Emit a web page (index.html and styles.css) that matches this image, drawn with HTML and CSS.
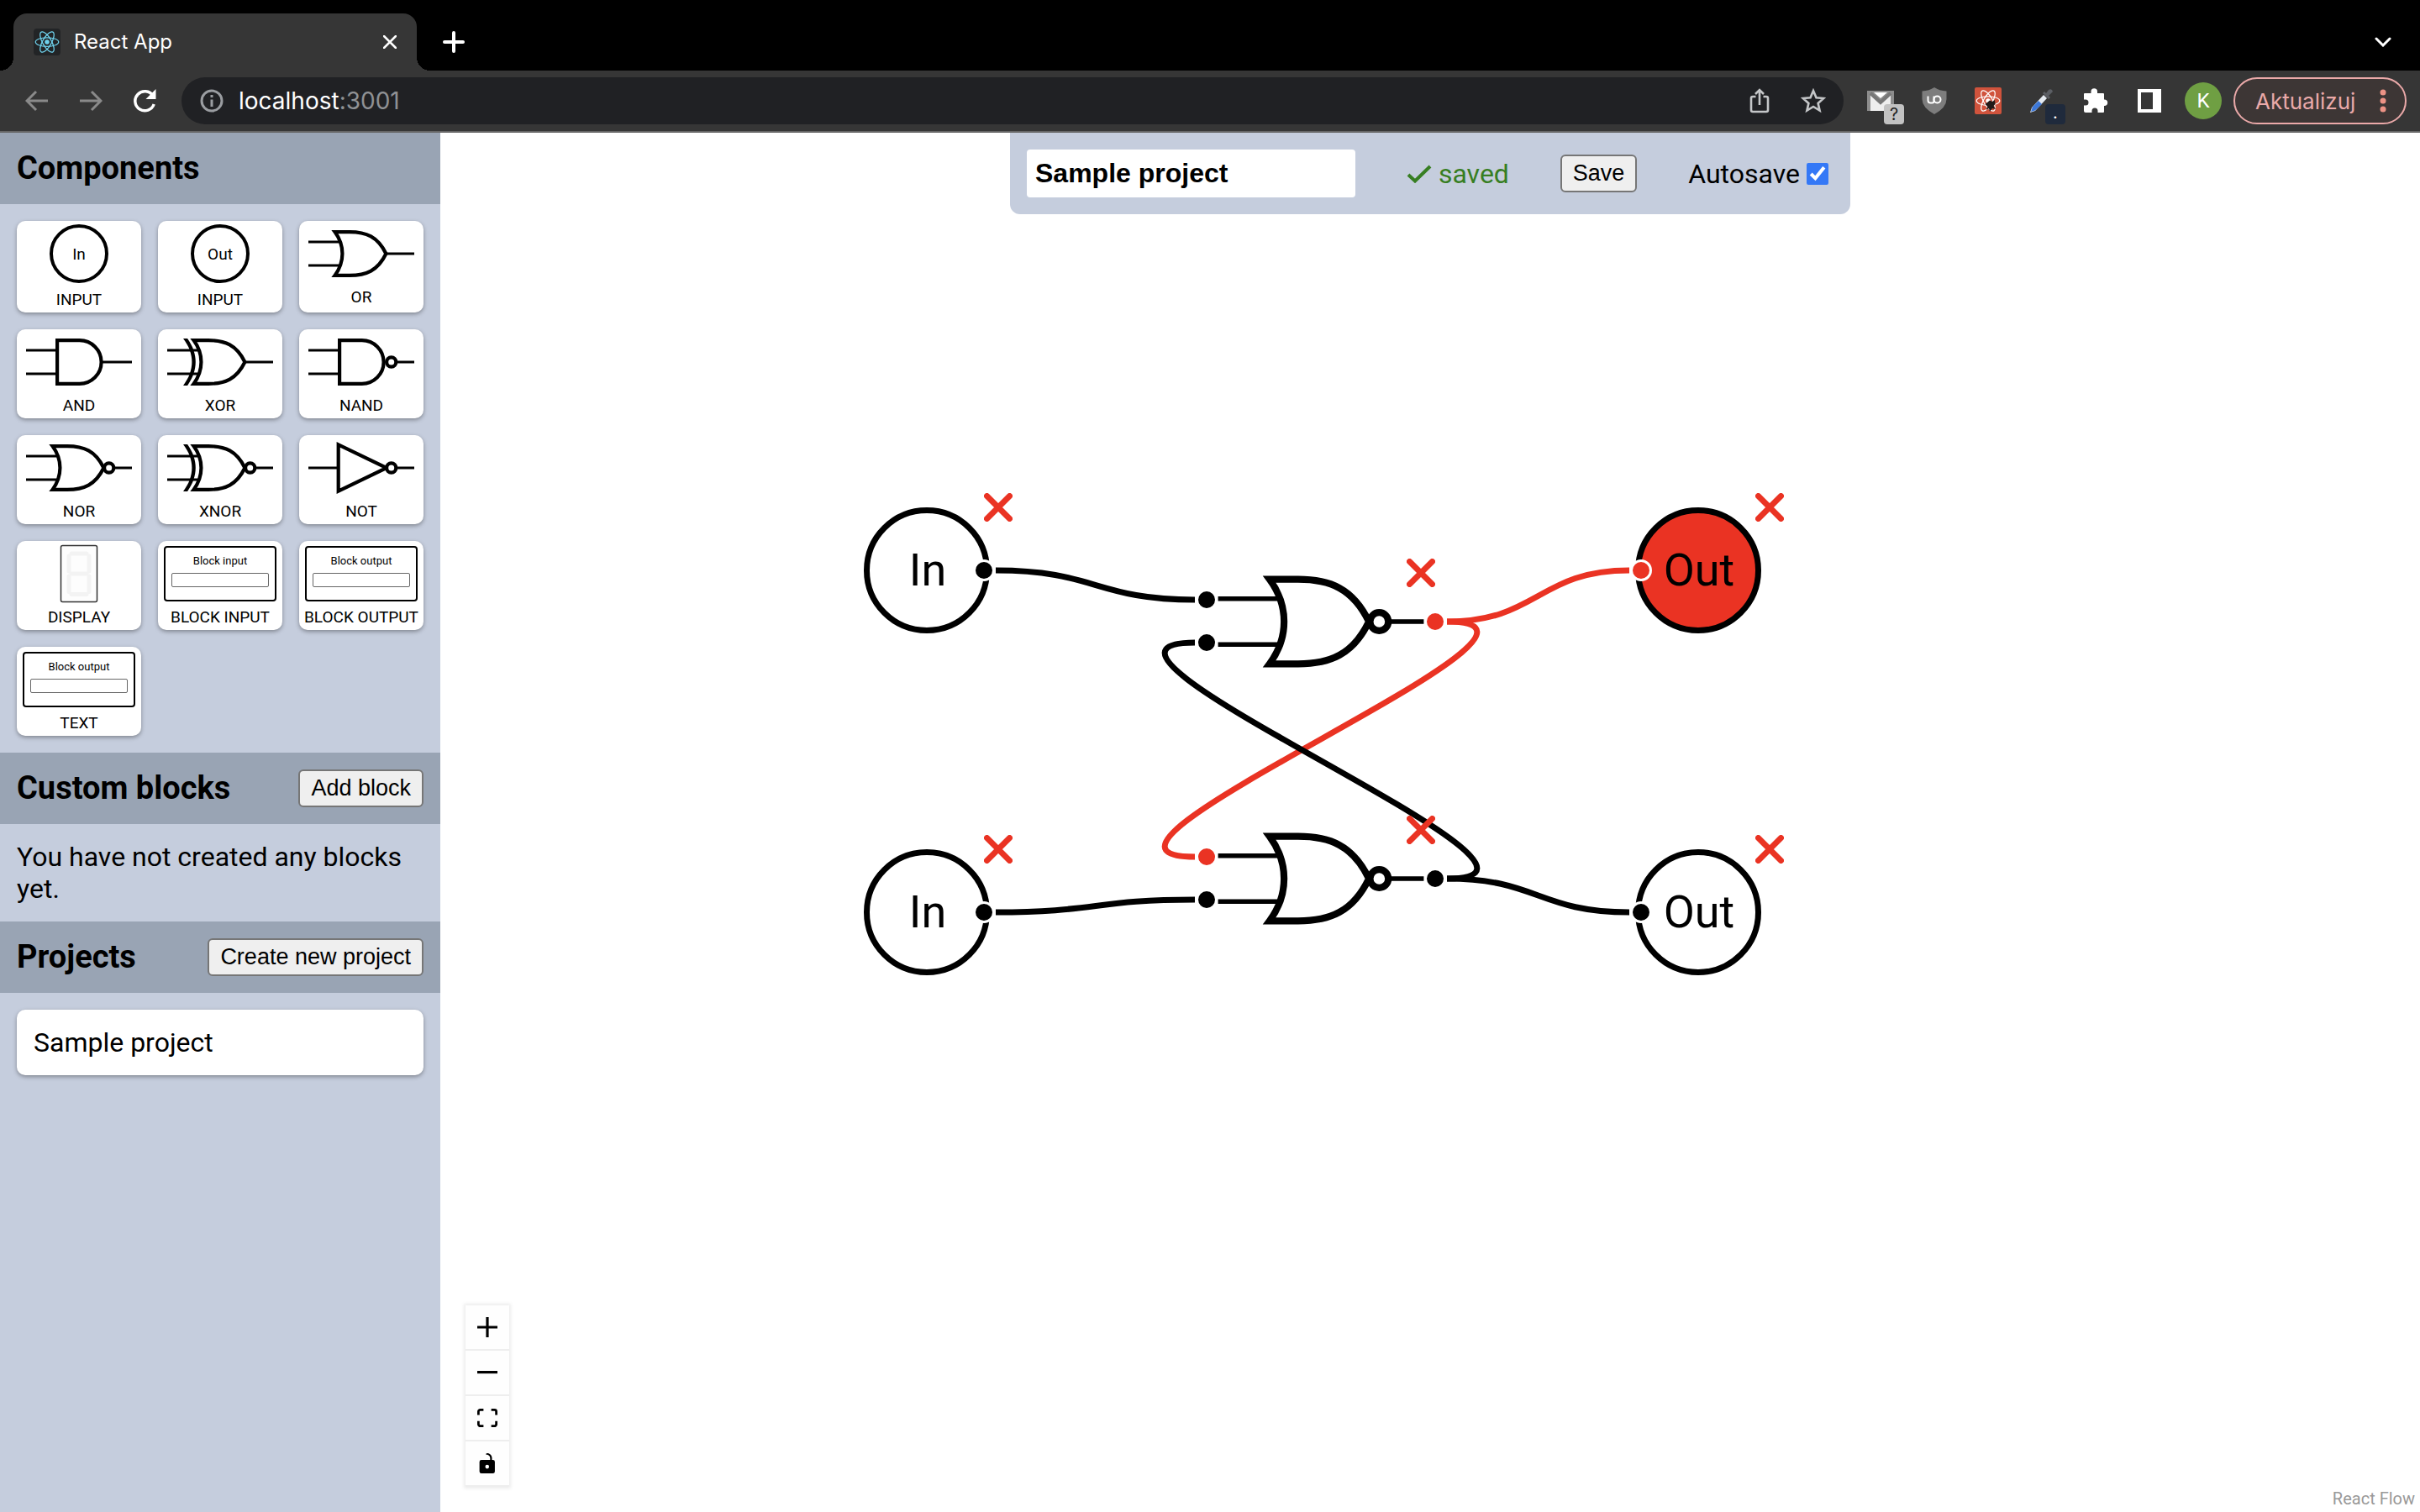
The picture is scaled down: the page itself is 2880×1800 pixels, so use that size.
FILE: index.html
```html
<!DOCTYPE html>
<html lang="en">
<head>
<meta charset="utf-8">
<title>React App</title>
<link rel="stylesheet" href="styles.css">
</head>
<body>
<svg class="defs" aria-hidden="true">
  <symbol id="gate-or" viewBox="0 0 100 50"><path class="thin" d="M5 15H32M5 35H32M71 25H95"/><path class="thick" d="M27.500 6.500H40C54 6.500 64 10.500 71 25C64 39.500 54 43.500 40 43.500H27.500C36 32 36 18 27.500 6.500Z"/></symbol>
  <symbol id="gate-nor" viewBox="0 0 100 50"><path class="thin" d="M5 15H32M5 35H32M79 25H95"/><path class="thick" d="M27.500 6.500H40C54 6.500 64 10.500 71 25C64 39.500 54 43.500 40 43.500H27.500C36 32 36 18 27.500 6.500Z"/><circle class="thick" cx="75.500" cy="25" r="4"/></symbol>
  <symbol id="gate-xor" viewBox="0 0 100 50"><path class="thin" d="M5 15H32M5 35H32M71 25H95"/><path class="thick" d="M27.500 6.500H40C54 6.500 64 10.500 71 25C64 39.500 54 43.500 40 43.500H27.500C36 32 36 18 27.500 6.500Z"/><path d="M18.600 5H22.200C31.500 18 31.500 32 22.200 45H18.600C28.500 32 28.500 18 18.600 5Z"/></symbol>
  <symbol id="gate-xnor" viewBox="0 0 100 50"><path class="thin" d="M5 15H32M5 35H32M79 25H95"/><path class="thick" d="M27.500 6.500H40C54 6.500 64 10.500 71 25C64 39.500 54 43.500 40 43.500H27.500C36 32 36 18 27.500 6.500Z"/><circle class="thick" cx="75.500" cy="25" r="4"/><path d="M18.600 5H22.200C31.500 18 31.500 32 22.200 45H18.600C28.500 32 28.500 18 18.600 5Z"/></symbol>
  <symbol id="gate-and" viewBox="0 0 100 50"><path class="thin" d="M5 15H31M5 35H31M70 25H95"/><path class="thick" d="M31.500 6.500H50.500A18.500 18.500 0 0 1 50.500 43.500H31.500Z"/></symbol>
  <symbol id="gate-nand" viewBox="0 0 100 50"><path class="thin" d="M5 15H31M5 35H31M79 25H95"/><path class="thick" d="M31.500 6.500H50.500A18.500 18.500 0 0 1 50.500 43.500H31.500Z"/><circle class="thick" cx="75.500" cy="25" r="4"/></symbol>
  <symbol id="gate-not" viewBox="0 0 100 50"><path class="thin" d="M5 25H30M79 25H95"/><path class="thick" d="M30.500 5.300L71.500 25L30.500 44.700Z"/><circle class="thick" cx="75.500" cy="25" r="4"/></symbol>
  <symbol id="atom" viewBox="-12 -12 24 24"><circle r="2.200" fill="currentColor"/><g fill="none" stroke="currentColor"><ellipse rx="11" ry="4.200"/><ellipse rx="11" ry="4.200" transform="rotate(60)"/><ellipse rx="11" ry="4.200" transform="rotate(120)"/></g></symbol>
  <symbol id="cross" viewBox="0 0 34 34"><path d="M3.500 3.500L30.500 30.500M30.500 3.500L3.500 30.500" fill="none" stroke="currentColor" stroke-width="7" stroke-linecap="round"/></symbol>
</svg>

<header class="browser">
  <div class="tabstrip">
    <div class="tab">
      <svg class="favicon" viewBox="0 0 32 32"><rect width="32" height="32" rx="4" fill="#222426"/><use href="#atom" x="1" y="1" width="30" height="30"/></svg>
      <span class="tab-title">React App</span>
      <button class="bare" aria-label="Close tab"><svg width="16" height="16" viewBox="0 0 16 16"><path d="M1 1L15 15M15 1L1 15" stroke="#fff" stroke-width="2.500" stroke-linecap="round"/></svg></button>
    </div>
    <button class="bare tool" aria-label="New tab"><svg width="26" height="26" viewBox="0 0 26 26"><path d="M13 2V24M2 13H24" stroke="#fff" stroke-width="4" stroke-linecap="round"/></svg></button>
    <button class="bare tool tab-search" aria-label="Search tabs"><svg width="20" height="12" viewBox="0 0 20 12"><path d="M2 2L10 10L18 2" fill="none" stroke="#fff" stroke-width="3" stroke-linecap="round"/></svg></button>
  </div>
  <div class="toolbar">
    <nav class="tools">
      <button class="bare tool" aria-label="Back"><svg width="28" height="28" viewBox="0 0 28 28"><path d="M27 14H3M13 3L2 14L13 25" fill="none" stroke="#8a8a8a" stroke-width="3"/></svg></button>
      <button class="bare tool" aria-label="Forward"><svg width="28" height="28" viewBox="0 0 28 28"><path d="M1 14H25M15 3L26 14L15 25" fill="none" stroke="#8a8a8a" stroke-width="3"/></svg></button>
      <button class="bare tool" aria-label="Reload"><svg width="28" height="28" viewBox="0 0 28 28"><path d="M24 8A11.500 11.500 0 1 0 25.200 18" fill="none" stroke="#fff" stroke-width="3.500"/><path d="M27.500 0V12H15.500Z" fill="#fff"/></svg></button>
    </nav>
    <div class="omnibox">
      <svg width="28" height="28" viewBox="0 0 28 28"><circle cx="14" cy="14" r="12" fill="none" stroke="#9a9da1" stroke-width="3"/><path d="M14 12.500V21M14 7V10" stroke="#9a9da1" stroke-width="3"/></svg>
      <span class="url">localhost<span class="port">:3001</span></span>
      <span class="tools">
        <button class="bare tool" aria-label="Share"><svg width="24" height="30" viewBox="0 0 24 30"><path d="M7.500 10H4Q2 10 2 12V26Q2 28 4 28H20Q22 28 22 26V12Q22 10 20 10H16.500M12 20V2M7 7L12 2L17 7" fill="none" stroke="#c4c6c8" stroke-width="2.600"/></svg></button>
        <button class="bare tool" aria-label="Bookmark"><svg width="30" height="30" viewBox="0 0 30 30"><path d="M15 3L18.500 11.300L27.300 12L20.600 17.900L22.600 26.600L15 22L7.400 26.600L9.400 17.900L2.700 12L11.500 11.300Z" fill="none" stroke="#c4c6c8" stroke-width="2.600"/></svg></button>
      </span>
    </div>
    <div class="tools">
      <button class="bare tool" aria-label="Mail"><svg width="32" height="24" viewBox="0 0 32 24"><rect width="32" height="24" fill="#8d8d8d"/><path d="M4 24V5L16 16L28 5V24Z" fill="#eee"/><path d="M8 2H24L16 9Z" fill="#fff"/><path d="M4 3L16 14L28 3" fill="none" stroke="#777" stroke-width="4"/></svg><span class="badge">?</span></button>
      <button class="bare tool" aria-label="uBlock"><svg width="30" height="32" viewBox="0 0 30 32"><path d="M15 0Q21 4 29.500 4.500V14Q29.500 24 15 32Q.5 24 .5 14V4.500Q9 4 15 0Z" fill="#7d7d7d"/><path d="M7.500 10.500V15.500Q7.500 18.500 10.500 18.500H12.500Q14.500 18.500 14.500 16V10.500" fill="none" stroke="#fff" stroke-width="2"/><circle cx="18.500" cy="14.500" r="4" fill="none" stroke="#fff" stroke-width="2"/></svg></button>
      <button class="bare tool" aria-label="React tools"><svg class="white" width="32" height="32" viewBox="0 0 32 32"><rect width="32" height="32" rx="2" fill="#d0533c"/><use href="#atom" x="1" y="1" width="30" height="30"/><path d="M15 18L18 15.500L21 17L24 15L24.500 20L22.500 22L25 26L21 25L18 29L17 25L13.500 27L15.500 23L12.500 20Z" fill="#221a18"/></svg></button>
      <button class="bare tool" aria-label="Color picker"><svg width="30" height="30" viewBox="0 0 30 30"><path d="M1 29L3 23L17 8L21 12L7 27Z" fill="#e4eaf1"/><path d="M2 28L4 22L11 15L15 19L7 26.500Z" fill="#3d78d8"/><path d="M16 6L23 13L25 11L23 9L28 4Q27 0 23 2L20 6L18 4Z" fill="#5b5e64"/></svg><span class="badge dark">.</span></button>
      <button class="bare tool" aria-label="Extensions"><svg width="30" height="30" viewBox="0 0 30 30"><path d="M2 6H9.500V4A3.700 3.700 0 0 1 17 4V6H24Q25 6 25 7V13.500H26A3.800 3.800 0 0 1 26 21H25V28Q25 29 24 29H17.500V27A3.500 3.500 0 0 0 10.500 27V29H3Q1 29 1 27V20.500H3A3.500 3.500 0 0 0 3 13.500H1V7Q1 6 2 6Z" fill="#fff"/></svg></button>
      <button class="bare tool" aria-label="Side panel"><svg width="28" height="28" viewBox="0 0 28 28"><path d="M0 0H28V28H0ZM4 4V24H18V4Z" fill="#fff" fill-rule="evenodd"/></svg></button>
      <button class="bare tool" aria-label="Profile"><span class="avatar">K</span></button>
    </div>
    <button class="update">Aktualizuj<svg width="8" height="28" viewBox="0 0 8 28"><g fill="#ec9285"><circle cx="4" cy="4" r="3.500"/><circle cx="4" cy="14" r="3.500"/><circle cx="4" cy="24" r="3.500"/></g></svg></button>
  </div>
</header>

<div class="app">
  <aside class="sidebar">
    <div class="section-head"><h3>Components</h3></div>
    <div class="palette">
      <div class="part tall"><svg class="icon" viewBox="0 0 140 70"><circle cx="70" cy="35" r="33" fill="none" stroke="#000" stroke-width="4"/><text x="70" y="42" text-anchor="middle">In</text></svg><span>INPUT</span></div>
      <div class="part tall"><svg class="icon" viewBox="0 0 140 70"><circle cx="70" cy="35" r="33" fill="none" stroke="#000" stroke-width="4"/><text x="70" y="42" text-anchor="middle">Out</text></svg><span>INPUT</span></div>
      <div class="part"><svg class="icon"><use href="#gate-or"/></svg><span>OR</span></div>
      <div class="part"><svg class="icon"><use href="#gate-and"/></svg><span>AND</span></div>
      <div class="part"><svg class="icon"><use href="#gate-xor"/></svg><span>XOR</span></div>
      <div class="part"><svg class="icon"><use href="#gate-nand"/></svg><span>NAND</span></div>
      <div class="part"><svg class="icon"><use href="#gate-nor"/></svg><span>NOR</span></div>
      <div class="part"><svg class="icon"><use href="#gate-xnor"/></svg><span>XNOR</span></div>
      <div class="part"><svg class="icon"><use href="#gate-not"/></svg><span>NOT</span></div>
      <div class="part"><svg class="icon" viewBox="0 0 140 70"><rect x="48.500" y="1.500" width="43" height="67" rx="2" fill="#fdfdfd" stroke="#333" stroke-width="1.500"/><path d="M61 11H79M61 35H79M61 59.500H79M58 14V32M82 14V32M58 38V56.500M82 38V56.500" stroke="#f3f3f3" stroke-width="5" stroke-linecap="round"/></svg><span>DISPLAY</span></div>
      <div class="part"><div class="icon block"><b>Block input</b><i></i></div><span>BLOCK INPUT</span></div>
      <div class="part"><div class="icon block"><b>Block output</b><i></i></div><span>BLOCK OUTPUT</span></div>
      <div class="part"><div class="icon block"><b>Block output</b><i></i></div><span>TEXT</span></div>
    </div>
    <div class="section-head"><h3>Custom blocks</h3><button class="btn">Add block</button></div>
    <p class="empty">You have not created any blocks yet.</p>
    <div class="section-head"><h3>Projects</h3><button class="btn">Create new project</button></div>
    <div class="projects"><a class="project" href="#">Sample project</a></div>
  </aside>

  <main class="canvas">
    <svg class="edges">
      <path class="on" d="M1198 582C1306 582 1307 521 1415 521"/>
      <path class="on" d="M1198 582C1396 582 700 862 898 862"/>
      <path d="M661 521C780 521 780 556 898 556"/>
      <path d="M661 928C780 928 780 913 898 913"/>
      <path d="M1198 888C1306 888 1307 928 1415 928"/>
      <path d="M1198 888C1396 888 700 607 898 607"/>
    </svg>

    <div class="node pin in top">In<i class="handle source"></i><button class="bare remove" aria-label="Remove"><svg><use href="#cross"/></svg></button></div>
    <div class="node pin in bottom">In<i class="handle source"></i><button class="bare remove" aria-label="Remove"><svg><use href="#cross"/></svg></button></div>
    <div class="node gate top"><svg><use href="#gate-nor"/></svg><i class="handle a"></i><i class="handle b"></i><i class="handle q on"></i><button class="bare remove" aria-label="Remove"><svg><use href="#cross"/></svg></button></div>
    <div class="node gate bottom"><svg><use href="#gate-nor"/></svg><i class="handle a on"></i><i class="handle b"></i><i class="handle q"></i><button class="bare remove" aria-label="Remove"><svg><use href="#cross"/></svg></button></div>
    <div class="node pin out top lit">Out<i class="handle target on"></i><button class="bare remove" aria-label="Remove"><svg><use href="#cross"/></svg></button></div>
    <div class="node pin out bottom">Out<i class="handle target"></i><button class="bare remove" aria-label="Remove"><svg><use href="#cross"/></svg></button></div>

    <form class="panel">
      <input class="name" type="text" value="Sample project" aria-label="Project name">
      <span class="saved"><svg width="30" height="22" viewBox="0 0 30 22"><path d="M2 12L10 19.500L28 2" fill="none" stroke="currentColor" stroke-width="4"/></svg>saved</span>
      <button class="btn" type="button">Save</button>
      <label class="autosave">Autosave<input type="checkbox" checked></label>
    </form>

    <div class="controls">
      <button aria-label="Zoom in"><svg viewBox="0 0 32 32"><path d="M32 18.133H18.133V32h-4.266V18.133H0v-4.266h13.867V0h4.266v13.867H32z"/></svg></button>
      <button aria-label="Zoom out"><svg viewBox="0 0 32 5"><path d="M0 0h32v4.200H0z"/></svg></button>
      <button aria-label="Fit view"><svg viewBox="0 0 32 30"><path d="M3.692 4.630c0-.53.4-.938.939-.938h5.215V0H4.708C2.130 0 0 2.054 0 4.630v5.216h3.692V4.631zM27.354 0h-5.200v3.692h5.170c.53 0 .984.4.984.939v5.215H32V4.631A4.624 4.624 0 0027.354 0zm.954 24.830c0 .532-.4.940-.939.940h-5.215v3.768h5.215c2.577 0 4.631-2.130 4.631-4.707v-5.139h-3.692v5.139zm-23.677.940c-.531 0-.939-.4-.939-.940v-5.138H0v5.139c0 2.577 2.130 4.707 4.708 4.707h5.138V25.770H4.631z"/></svg></button>
      <button aria-label="Lock"><svg viewBox="0 0 25 32"><path d="M21.333 10.667H19.810V7.619C19.810 3.429 16.380 0 12.190 0c-4.114 1.828-1.370 2.133.305 2.438 1.676.305 4.420 2.590 4.420 5.181v3.048H3.047A3.056 3.056 0 000 13.714v15.238A3.056 3.056 0 003.048 32h18.285a3.056 3.056 0 003.048-3.048V13.714a3.056 3.056 0 00-3.048-3.047zM12.190 24.533a3.056 3.056 0 01-3.047-3.047 3.056 3.056 0 013.047-3.048 3.056 3.056 0 013.048 3.048 3.056 3.056 0 01-3.048 3.047z"/></svg></button>
    </div>
    <a class="attribution" href="#">React Flow</a>
  </main>
</div>
</body>
</html>
```
FILE: styles.css
```css
* { box-sizing: border-box; }

body {
  margin: 0;
  min-height: 100vh;
  display: flex;
  flex-direction: column;
  font-family: Roboto, sans-serif;
  font-size: 32px;
  line-height: 38px;
  color: #000;
  background: #fff;
}

.defs { position: absolute; width: 0; height: 0; }
.thin { fill: none; stroke: #000; stroke-width: 2; }
.thick { fill: #fff; stroke: #000; stroke-width: 3; stroke-miterlimit: 10; }
.white { color: #fff; }

.bare {
  border: 0;
  padding: 0;
  background: none;
  display: flex;
  align-items: center;
  justify-content: center;
}

/* Browser frame */
.browser { font-family: Inter, sans-serif; color: #fff; }

.tabstrip {
  height: 84px;
  padding: 16px 20px 0 16px;
  display: flex;
  align-items: center;
  background: #000;
}

.tab {
  position: relative;
  width: 480px;
  height: 68px;
  padding: 0 24px;
  margin-right: 20px;
  display: flex;
  align-items: center;
  gap: 16px;
  border-radius: 16px 16px 0 0;
  background: #363636;
}

.tab::before,
.tab::after {
  content: "";
  position: absolute;
  bottom: 0;
  width: 16px;
  height: 16px;
}
.tab::before { right: 100%; background: radial-gradient(circle at 0 0, #000 16px, #363636 16px); }
.tab::after { left: 100%; background: radial-gradient(circle at 100% 0, #000 16px, #363636 16px); }

.favicon { width: 32px; height: 32px; color: #6fd3ee; }
.tab-title { flex: 1; font-size: 24px; }
.tool { position: relative; width: 48px; height: 48px; }
.tab-search { margin-left: auto; }

.toolbar {
  height: 74px;
  padding: 0 16px 0 20px;
  display: flex;
  align-items: center;
  background: #363636;
  border-bottom: 2px solid #666;
}

.tools { display: flex; gap: 16px; }

.omnibox {
  flex: 1;
  height: 56px;
  margin: 0 20px;
  padding: 0 12px 0 22px;
  display: flex;
  align-items: center;
  gap: 18px;
  border-radius: 28px;
  background: #202124;
}
.url { flex: 1; font-size: 28px; }
.port { color: #8f9194; }

.badge {
  position: absolute;
  right: -4px;
  bottom: -4px;
  width: 24px;
  height: 24px;
  border-radius: 4px;
  background: #c2c2c2;
  color: #222;
  font: 20px/24px Inter, sans-serif;
}
.badge.dark { background: #1f2a3c; color: #fff; line-height: 20px; }

.avatar {
  width: 44px;
  height: 44px;
  border-radius: 50%;
  background: #6f9f43;
  color: #fff;
  font: 24px/44px Roboto, sans-serif;
}

.update {
  height: 56px;
  min-width: 206px;
  margin-left: 12px;
  padding: 0 22px 0 24px;
  display: flex;
  align-items: center;
  justify-content: space-between;
  border: 2px solid #eaa9a9;
  border-radius: 28px;
  background: #3d3635;
  color: #eaa9a9;
  font: 26px Inter, sans-serif;
}

/* App */
.app { flex: 1; display: flex; }

.sidebar { width: 524px; background: #c5cddd; }

.section-head {
  display: flex;
  justify-content: space-between;
  padding: 20px;
  background: #99a4b4;
}
.section-head h3 { margin: 0; font-size: 38px; line-height: 45px; }

.btn {
  height: 45px;
  padding: 0 13px;
  border: 2px solid #767676;
  border-radius: 6px;
  background: #efefef;
  color: #000;
  font: 27px "Liberation Sans", sans-serif;
}

.palette {
  display: grid;
  grid-template-columns: repeat(3, 1fr);
  gap: 20px;
  padding: 20px;
}

.part,
.project {
  border-radius: 10px;
  background: #fff;
  box-shadow: 0 2px 5px rgba(0, 0, 0, 0.35);
}

.part {
  display: flex;
  flex-direction: column;
  align-items: center;
  gap: 6px;
  padding: 4px 0;
  font-size: 19px;
  line-height: 22px;
  white-space: nowrap;
}
.part.tall { gap: 9px; }

.icon { width: 140px; height: 70px; font-size: 19px; }

.block {
  width: 134px;
  height: 66px;
  margin: 2px 0;
  padding: 8px 7px;
  display: flex;
  flex-direction: column;
  gap: 7px;
  border: 2px solid #000;
  border-radius: 4px;
  text-align: center;
}
.block b { font-weight: normal; font-size: 13px; line-height: 15px; }
.block i { height: 17px; border: 1px solid #666; border-radius: 2px; }

.empty { margin: 0; padding: 20px; }

.projects { padding: 20px; }
.project { display: block; padding: 20px; color: #000; text-decoration: none; }

/* Flow canvas */
.canvas { position: relative; flex: 1; overflow: hidden; }

.edges { position: absolute; inset: 0; width: 100%; height: 100%; }
.edges path { fill: none; stroke: #000; stroke-width: 7; }
.edges .on { stroke: #ea3323; }

.node { position: absolute; }

.pin {
  width: 150px;
  height: 150px;
  padding-left: 2px;
  border: 7px solid #000;
  border-radius: 50%;
  background: #fff;
  font-size: 54px;
  line-height: 136px;
  text-align: center;
}
.pin.top { top: 446px; }
.pin.bottom { top: 853px; }
.pin.in { left: 504px; }
.pin.out { left: 1422px; }
.pin.lit { background: #ea3323; }

.gate { left: 912px; width: 272px; height: 136px; }
.gate.top { top: 514px; }
.gate.bottom { top: 820px; }
.gate > svg { display: block; width: 100%; height: 100%; }

.handle {
  position: absolute;
  width: 26px;
  height: 26px;
  border: 3px solid #fff;
  border-radius: 50%;
  background: #000;
}
.handle.on { background: #ea3323; }
.source { right: -13px; top: 55px; }
.target { left: -13px; top: 55px; }
.a { left: -13px; top: 29px; }
.b { left: -13px; top: 80px; }
.q { right: -13px; top: 55px; }

.remove { position: absolute; width: 34px; height: 34px; color: #ea3323; }
.remove svg { width: 34px; height: 34px; }
.pin .remove { left: 136px; top: -24px; }
.gate .remove { left: 238px; top: -7px; }

.panel {
  position: absolute;
  top: 0;
  left: 50%;
  width: 1000px;
  transform: translateX(-50%);
  padding: 20px;
  display: flex;
  align-items: center;
  justify-content: space-between;
  border-radius: 0 0 12px 12px;
  background: #c5cddd;
}

.name {
  width: 391px;
  height: 57px;
  padding: 0 10px;
  border: 0;
  border-radius: 4px;
  background: #fff;
  color: #000;
  font: bold 32px "Liberation Sans", sans-serif;
}

.saved { display: flex; align-items: center; gap: 8px; color: #377e22; }

.autosave { display: flex; align-items: center; gap: 8px; }
.autosave input { width: 26px; height: 26px; margin: 0 6px 0 0; accent-color: #3478f6; }

.controls {
  position: absolute;
  left: 30px;
  bottom: 30px;
  box-shadow: 0 0 4px 2px rgba(0, 0, 0, 0.08);
}
.controls button {
  width: 52px;
  height: 54px;
  padding: 0;
  display: flex;
  align-items: center;
  justify-content: center;
  border: 0;
  border-bottom: 2px solid #eee;
  background: #fefefe;
}
.controls svg { width: 24px; max-height: 24px; }

.attribution {
  position: absolute;
  right: 0;
  bottom: 0;
  padding: 4px 6px;
  color: #999;
  font-size: 20px;
  line-height: 23px;
  text-decoration: none;
}
```
